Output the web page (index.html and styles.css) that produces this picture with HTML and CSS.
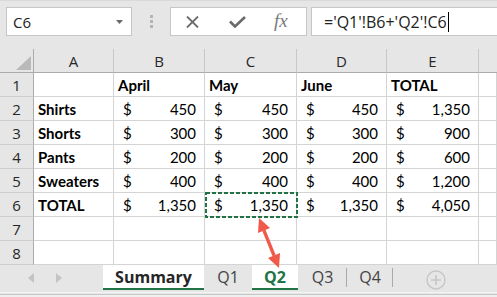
FILE: index.html
```html
<!DOCTYPE html>
<html>
<head>
<meta charset="utf-8">
<link rel="stylesheet" href="styles.css">
</head>
<body>
<div class="app">
  <div class="toolbar">
    <div class="namebox">
      <span>C6</span>
      <svg class="dd" width="7" height="4" viewBox="0 0 7 4"><path d="M0 0H7L3.5 4Z" fill="#6a6a6a"/></svg>
    </div>
    <div class="grip"><i></i><i></i><i></i></div>
    <div class="fxbox">
      <svg class="ico-x" width="13" height="12" viewBox="0 0 13 12"><path d="M1 0.5L12 11.5M12 0.5L1 11.5" stroke="#6b6b6b" stroke-width="1.8" fill="none"/></svg>
      <svg class="ico-check" width="17" height="12" viewBox="0 0 17 12"><path d="M1 5.5L6 10.5L16 1" stroke="#6b6b6b" stroke-width="2.6" fill="none"/></svg>
      <span class="fx">fx</span>
    </div>
    <div class="formula">='Q1'!B6+'Q2'!C6<span class="caret"></span></div>
  </div>

  <div class="grid">
    <div class="ch corner"><svg width="15" height="14" viewBox="0 0 15 14"><path d="M15 0V14H0Z" fill="#b9b9b9"/></svg></div>
    <div class="ch">A</div><div class="ch">B</div><div class="ch">C</div><div class="ch">D</div><div class="ch">E</div><div class="ch last"></div>

    <div class="rh">1</div>
    <div class="c"></div><div class="c b">April</div><div class="c b">May</div><div class="c b">June</div><div class="c b">TOTAL</div><div class="c"></div>

    <div class="rh">2</div>
    <div class="c b">Shirts</div>
    <div class="c cur"><span>$</span><span>450</span></div>
    <div class="c cur"><span>$</span><span>450</span></div>
    <div class="c cur"><span>$</span><span>450</span></div>
    <div class="c cur"><span>$</span><span>1,350</span></div>
    <div class="c"></div>

    <div class="rh">3</div>
    <div class="c b">Shorts</div>
    <div class="c cur"><span>$</span><span>300</span></div>
    <div class="c cur"><span>$</span><span>300</span></div>
    <div class="c cur"><span>$</span><span>300</span></div>
    <div class="c cur"><span>$</span><span>900</span></div>
    <div class="c"></div>

    <div class="rh">4</div>
    <div class="c b">Pants</div>
    <div class="c cur"><span>$</span><span>200</span></div>
    <div class="c cur"><span>$</span><span>200</span></div>
    <div class="c cur"><span>$</span><span>200</span></div>
    <div class="c cur"><span>$</span><span>600</span></div>
    <div class="c"></div>

    <div class="rh">5</div>
    <div class="c b">Sweaters</div>
    <div class="c cur"><span>$</span><span>400</span></div>
    <div class="c cur"><span>$</span><span>400</span></div>
    <div class="c cur"><span>$</span><span>400</span></div>
    <div class="c cur"><span>$</span><span>1,200</span></div>
    <div class="c"></div>

    <div class="rh">6</div>
    <div class="c b">TOTAL</div>
    <div class="c cur"><span>$</span><span>1,350</span></div>
    <div class="c cur sel"><span>$</span><span>1,350</span>
      <svg class="marquee" width="93" height="26" viewBox="0 0 93 26"><rect x="1" y="1" width="91" height="24" fill="none" stroke="#217346" stroke-width="2" stroke-dasharray="4 2"/></svg>
    </div>
    <div class="c cur"><span>$</span><span>1,350</span></div>
    <div class="c cur"><span>$</span><span>4,050</span></div>
    <div class="c"></div>

    <div class="rh">7</div>
    <div class="c"></div><div class="c"></div><div class="c"></div><div class="c"></div><div class="c"></div><div class="c"></div>

    <div class="rh">8</div>
    <div class="c"></div><div class="c"></div><div class="c"></div><div class="c"></div><div class="c"></div><div class="c"></div>
  </div>

  <div class="tabs">
    <div class="nav">
      <svg width="6" height="10" viewBox="0 0 6 10"><path d="M6 0V10L0 5Z" fill="#c4c4c4"/></svg>
      <svg width="6" height="10" viewBox="0 0 6 10"><path d="M0 0V10L6 5Z" fill="#c4c4c4"/></svg>
    </div>
    <div class="tab sel-tab summary">Summary</div>
    <div class="tab q1">Q1</div>
    <div class="tab sel-tab active">Q2</div>
    <div class="tab sep q3">Q3</div>
    <div class="tab sep q4">Q4</div>
    <div class="add">
      <svg width="20" height="20" viewBox="0 0 20 20"><circle cx="10" cy="10" r="9" fill="none" stroke="#c6c6c6" stroke-width="1.4"/><path d="M10 5V15M5 10H15" stroke="#c6c6c6" stroke-width="1.6"/></svg>
    </div>
  </div>
  <div class="status"></div>

  <svg class="arrow" width="497" height="297" viewBox="0 0 497 297">
    <line x1="263.8" y1="230.1" x2="274.2" y2="255.9" stroke="#f05a4b" stroke-width="3.4"/>
    <path d="M259 218L258 233L270 228Z" fill="#f05a4b"/>
    <path d="M279 268L268 258L280 253Z" fill="#f05a4b"/>
  </svg>
</div>
</body>
</html>
```

FILE: styles.css
```css
* {
  box-sizing: border-box;
}

html, body {
  margin: 0;
  padding: 0;
  background: #ffffff;
}

.app {
  position: relative;
  width: 497px;
  height: 297px;
  overflow: hidden;
  background: #e6e6e6;
  font-family: "Open Sans", "Noto Sans", sans-serif;
  color: #262626;
}

/* ---------- formula toolbar ---------- */
.toolbar {
  height: 49px;
  display: flex;
  align-items: flex-start;
  padding: 6px 0 0 6px;
  border-top: 1px solid #d9d9d9;
  background: #e6e6e6;
}

.namebox {
  width: 126px;
  height: 29px;
  background: #fff;
  border: 1px solid #c6c6c6;
  display: flex;
  align-items: center;
  justify-content: space-between;
  padding: 0 8px 0 6px;
  font-size: 15px;
  color: #222;
}

.grip {
  width: 3px;
  margin: 8px 17px 0 18px;
  display: flex;
  flex-direction: column;
  gap: 2px;
}

.grip i {
  display: block;
  width: 3px;
  height: 3px;
  background: #b4b4b4;
}

.fxbox {
  width: 137px;
  height: 29px;
  background: #fff;
  border: 1px solid #c6c6c6;
  display: flex;
  align-items: center;
}

.ico-x {
  margin-left: 15px;
}

.ico-check {
  margin-left: 30px;
}

.fx {
  margin-left: 28px;
  font-family: "Liberation Serif", "DejaVu Serif", serif;
  font-style: italic;
  font-size: 19px;
  color: #7a7a7a;
  line-height: 1;
  margin-top: -2px;
}

.formula {
  flex: 1;
  margin-left: 4px;
  margin-right: -4px;
  height: 29px;
  background: #fff;
  border: 1px solid #c6c6c6;
  padding-left: 12px;
  display: flex;
  align-items: center;
  font-size: 16px;
  color: #222;
  white-space: pre;
}

.caret {
  display: inline-block;
  width: 1px;
  height: 20px;
  background: #000;
  margin-left: 1px;
}

/* ---------- grid ---------- */
.grid {
  display: grid;
  grid-template-columns: 34px 80px 91px 92px 90px 92px 18px;
  grid-auto-rows: 24px;
  background: #fff;
}

.ch {
  background: #e6e6e6;
  border-right: 1px solid #c8c8c8;
  border-bottom: 1px solid #ababab;
  display: flex;
  align-items: center;
  justify-content: center;
  font-size: 15px;
  color: #262626;
}

.ch.corner {
  border-right-color: #ababab;
  align-items: flex-end;
  justify-content: flex-end;
  padding: 0 2px 2px 0;
}

.ch.last {
  border-right: none;
}

.rh {
  background: #e6e6e6;
  border-right: 1px solid #ababab;
  border-bottom: 1px solid #cdcdcd;
  display: flex;
  align-items: center;
  justify-content: center;
  font-size: 15px;
  color: #262626;
}

.c {
  border-right: 1px solid #d4d4d4;
  border-bottom: 1px solid #d4d4d4;
  display: flex;
  align-items: center;
  padding: 1px 4px 0 4px;
  font-family: "Lato", "Liberation Sans", sans-serif;
  font-size: 15px;
  color: #000;
  white-space: nowrap;
}

.c.b {
  font-weight: 700;
}

.c.cur {
  justify-content: space-between;
  padding: 1px 8px 0 9px;
}

.c.sel {
  position: relative;
}

.marquee {
  position: absolute;
  left: 0;
  top: -1px;
}

/* ---------- sheet tabs ---------- */
.tabs {
  margin-top: -1px;
  height: 28px;
  border-top: 1px solid #a9a9a9;
  display: flex;
  align-items: flex-start;
  background: #e6e6e6;
}

.nav {
  width: 103px;
  height: 25px;
  display: flex;
  align-items: center;
  padding-left: 28px;
  gap: 22px;
}

.tab {
  position: relative;
  height: 25px;
  display: flex;
  align-items: center;
  justify-content: center;
  font-size: 16px;
  color: #444;
  border-bottom: 2px solid transparent;
}

.tab.sel-tab {
  background: #fff;
  border-bottom-color: #217346;
  font-weight: 700;
  color: #262626;
}

.tab.active {
  color: #217346;
}

.summary { width: 101px; }
.q1 { width: 48px; }
.active { width: 46px; }
.q3 { width: 49px; }
.q4 { width: 46px; }

.tab.sep::after {
  content: "";
  position: absolute;
  right: 0;
  top: 3px;
  width: 1px;
  height: 19px;
  background: #a9a9a9;
}

.add {
  margin-left: 33px;
  height: 25px;
  display: flex;
  align-items: center;
  margin-top: 2px;
}

.status {
  height: 5px;
  background: linear-gradient(#f4f4f4 0 1px, #e6e6e6 1px 2px, #c8c8c8 2px 3px, #efefef 3px);
}

.arrow {
  position: absolute;
  left: 0;
  top: 0;
  pointer-events: none;
}
```
